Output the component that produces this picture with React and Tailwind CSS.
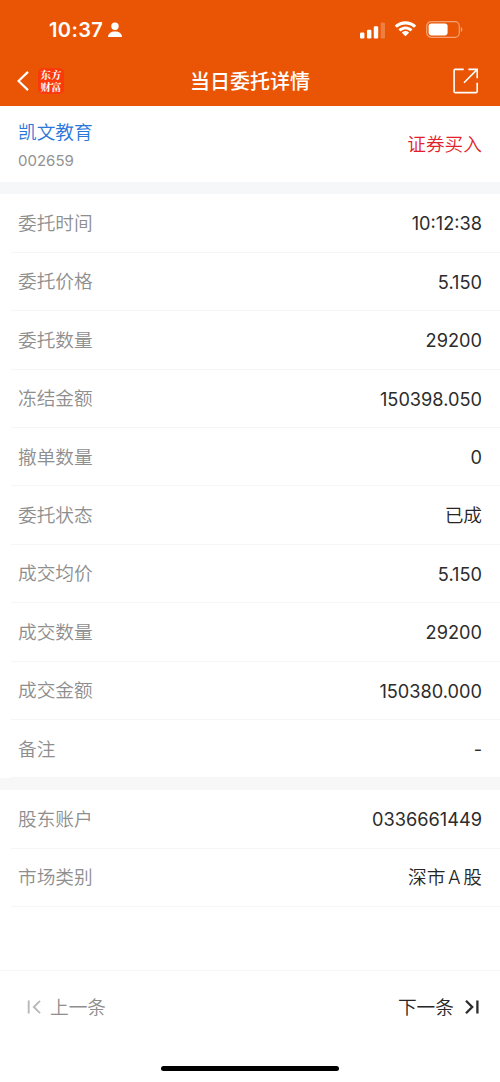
import React from 'react';

const orderRows = [
  { label: '委托时间', value: '10:12:38' },
  { label: '委托价格', value: '5.150' },
  { label: '委托数量', value: '29200' },
  { label: '冻结金额', value: '150398.050' },
  { label: '撤单数量', value: '0' },
  { label: '委托状态', value: '已成', isText: true },
  { label: '成交均价', value: '5.150' },
  { label: '成交数量', value: '29200' },
  { label: '成交金额', value: '150380.000' },
  { label: '备注', value: '-' },
];

const accountRows = [
  { label: '股东账户', value: '0336661449' },
  { label: '市场类别', value: '深市 A 股', isText: true },
];

// Status bar with time, signal, wifi and battery
function StatusBar() {
  return (
    <div className="flex h-[56px] items-start justify-between pl-[49px] pr-[37px] pt-[18px]">
      <div className="flex items-center gap-[5px]">
        <span className="text-[20px] font-semibold leading-6 tracking-[0.4px]">10:37</span>
        <svg width="14" height="16" viewBox="0 0 14 16" fill="currentColor">
          <circle cx="7" cy="4.2" r="3.7" />
          <path d="M0 15c0-3.6 3-5.6 7-5.6s7 2 7 5.6z" />
        </svg>
      </div>
      <div className="flex h-6 items-center">
        <svg width="25" height="17" viewBox="0 0 25 17" fill="currentColor">
          <rect x="0" y="10.5" width="4.4" height="6" rx="1.2" />
          <rect x="7" y="7.8" width="4.4" height="8.7" rx="1.2" />
          <rect x="13.8" y="4.2" width="4.4" height="12.3" rx="1.2" />
          <rect x="20.7" y="0.5" width="4.3" height="16" rx="1.2" opacity="0.25" />
        </svg>
        <svg className="-mt-px ml-[9px]" width="23" height="17" viewBox="0 0 23 17" fill="currentColor">
          <path d="M11.5 3.4c3.1 0 6 1.2 8.2 3.2.2.2.4.2.6 0l1.6-1.6c.2-.2.2-.5 0-.7C16-1 7-1 1.1 4.3c-.2.2-.2.5 0 .7l1.6 1.6c.2.2.4.2.6 0 2.2-2 5.1-3.2 8.2-3.2z" />
          <path d="M11.5 8.6c1.7 0 3.3.6 4.5 1.7.2.2.4.2.6 0l1.6-1.6c.2-.2.2-.5 0-.7-3.8-3.5-9.6-3.5-13.4 0-.2.2-.2.5 0 .7l1.6 1.6c.2.2.4.2.6 0 1.2-1.1 2.8-1.7 4.5-1.7z" />
          <path d="M14.8 12c.2-.2.2-.5 0-.7-1.9-1.6-4.7-1.6-6.600 0-.2.2-.2.5 0 .7l2.9 2.9c.2.2.5.2.7 0z" />
        </svg>
        <svg className="-mt-px ml-[9px]" width="37" height="17" viewBox="0 0 37 17" fill="none">
          <rect x="0.7" y="0.7" width="32.6" height="15.6" rx="4.5" stroke="currentColor" strokeWidth="1.2" opacity="0.45" />
          <rect x="2.6" y="2.6" width="19" height="11.8" rx="2.8" fill="currentColor" />
          <path d="M34.8 6v5c1-.4 1.6-1.4 1.6-2.5s-.6-2.1-1.6-2.5z" fill="currentColor" opacity="0.45" />
        </svg>
      </div>
    </div>
  );
}

function NavBar() {
  return (
    <div className="grid h-[50px] grid-cols-[1fr_auto_1fr] items-center px-[17px]">
      <div className="flex items-center">
        <svg width="12" height="20" viewBox="0 0 12 20" fill="none" stroke="currentColor" strokeWidth="2.2">
          <path d="M11 0.9L1.5 10L11 19.1" />
        </svg>
        <div className="ml-[9px] flex h-[26px] w-[26px] flex-col items-center justify-center rounded-[5px] bg-[#fb3a0c] font-['Noto_Serif_CJK_SC','Noto_Sans_CJK_SC',serif] text-[10.5px] font-bold leading-[12px]">
          <span>东方</span>
          <span>财富</span>
        </div>
      </div>
      <h1 className="pt-[2px] text-[20px] font-medium leading-6">当日委托详情</h1>
      <svg className="ml-auto mr-[4px]" width="26" height="26" viewBox="0 0 26 26" fill="none" stroke="currentColor" strokeWidth="1.6">
        <path d="M10.7 1.4H2.1Q1.1 1.4 1.1 2.4V23.6Q1.1 24.6 2.1 24.6H23.2Q24.2 24.6 24.2 23.6V14.8" />
        <path d="M15.4 1.4H24.2V10.3M24.2 1.4L11 14.8" />
      </svg>
    </div>
  );
}

function DetailRow({ label, value, isText }) {
  return (
    <div className="ml-[11px] flex h-[58.4px] items-center justify-between border-b border-[#f6f6f6] pl-[7px] pr-[18px]">
      <span className="pt-[2px] font-[350] text-[#8e8e8e]">{label}</span>
      {isText ? (
        <span className="pt-[2px] font-[350] text-[#262626] [word-spacing:-2.6px]">{value}</span>
      ) : (
        <span className="pt-[2px] text-[18.2px] text-[#2c2c2c]">{value}</span>
      )}
    </div>
  );
}

function App() {
  return (
    <div className="flex h-[1082px] w-[500px] flex-col bg-white font-['Inter','Noto_Sans_CJK_SC',sans-serif] text-[18.7px]">
      <header className="h-[106px] bg-[#e95504] text-white">
        <StatusBar />
        <NavBar />
      </header>

      {/* Stock name and trade direction */}
      <section className="flex h-[76px] items-center justify-between px-[18px]">
        <div className="pt-[4px]">
          <div className="font-[350] leading-7 text-[#2a77da]">凯文教育</div>
          <div className="mt-[2px] text-[15px] leading-6 text-[#929292]">002659</div>
        </div>
        <span className="pt-[2px] font-[350] text-[#e31f29]">证券买入</span>
      </section>

      <div className="h-[12.4px] bg-[#f5f7f9]" />
      <section>
        {orderRows.map((row) => (
          <DetailRow key={row.label} label={row.label} value={row.value} isText={row.isText} />
        ))}
      </section>

      <div className="h-3 bg-[#f7f7f7]" />
      <section>
        {accountRows.map((row) => (
          <DetailRow key={row.label} label={row.label} value={row.value} isText={row.isText} />
        ))}
      </section>

      {/* Previous / next record */}
      <footer className="mt-auto flex h-[112px] flex-col border-t border-[#f6f6f6]">
        <div className="flex h-[72px] items-center justify-between pl-[27px] pr-[21px]">
          <button className="flex items-center gap-[9px] font-[350] text-[#8e8e8e]">
            <svg width="14" height="14" viewBox="0 0 14 14" fill="none" stroke="#b9b9b9" strokeWidth="1.9">
              <path d="M1.7 0.4V13.6M13 0.8L6.8 7L13 13.2" />
            </svg>
            <span className="pt-[2px]">上一条</span>
          </button>
          <button className="flex items-center gap-[11px] font-[350] text-[#262626]">
            <span className="pt-[2px]">下一条</span>
            <svg width="14" height="14" viewBox="0 0 14 14" fill="none" stroke="#2c2c2c" strokeWidth="2.3">
              <path d="M1 0.8L7.2 7L1 13.2M12.4 0.4V13.6" />
            </svg>
          </button>
        </div>
        <div className="mx-auto mt-[23px] h-[5px] w-[178px] rounded-full bg-black" />
      </footer>
    </div>
  );
}

export default App;
